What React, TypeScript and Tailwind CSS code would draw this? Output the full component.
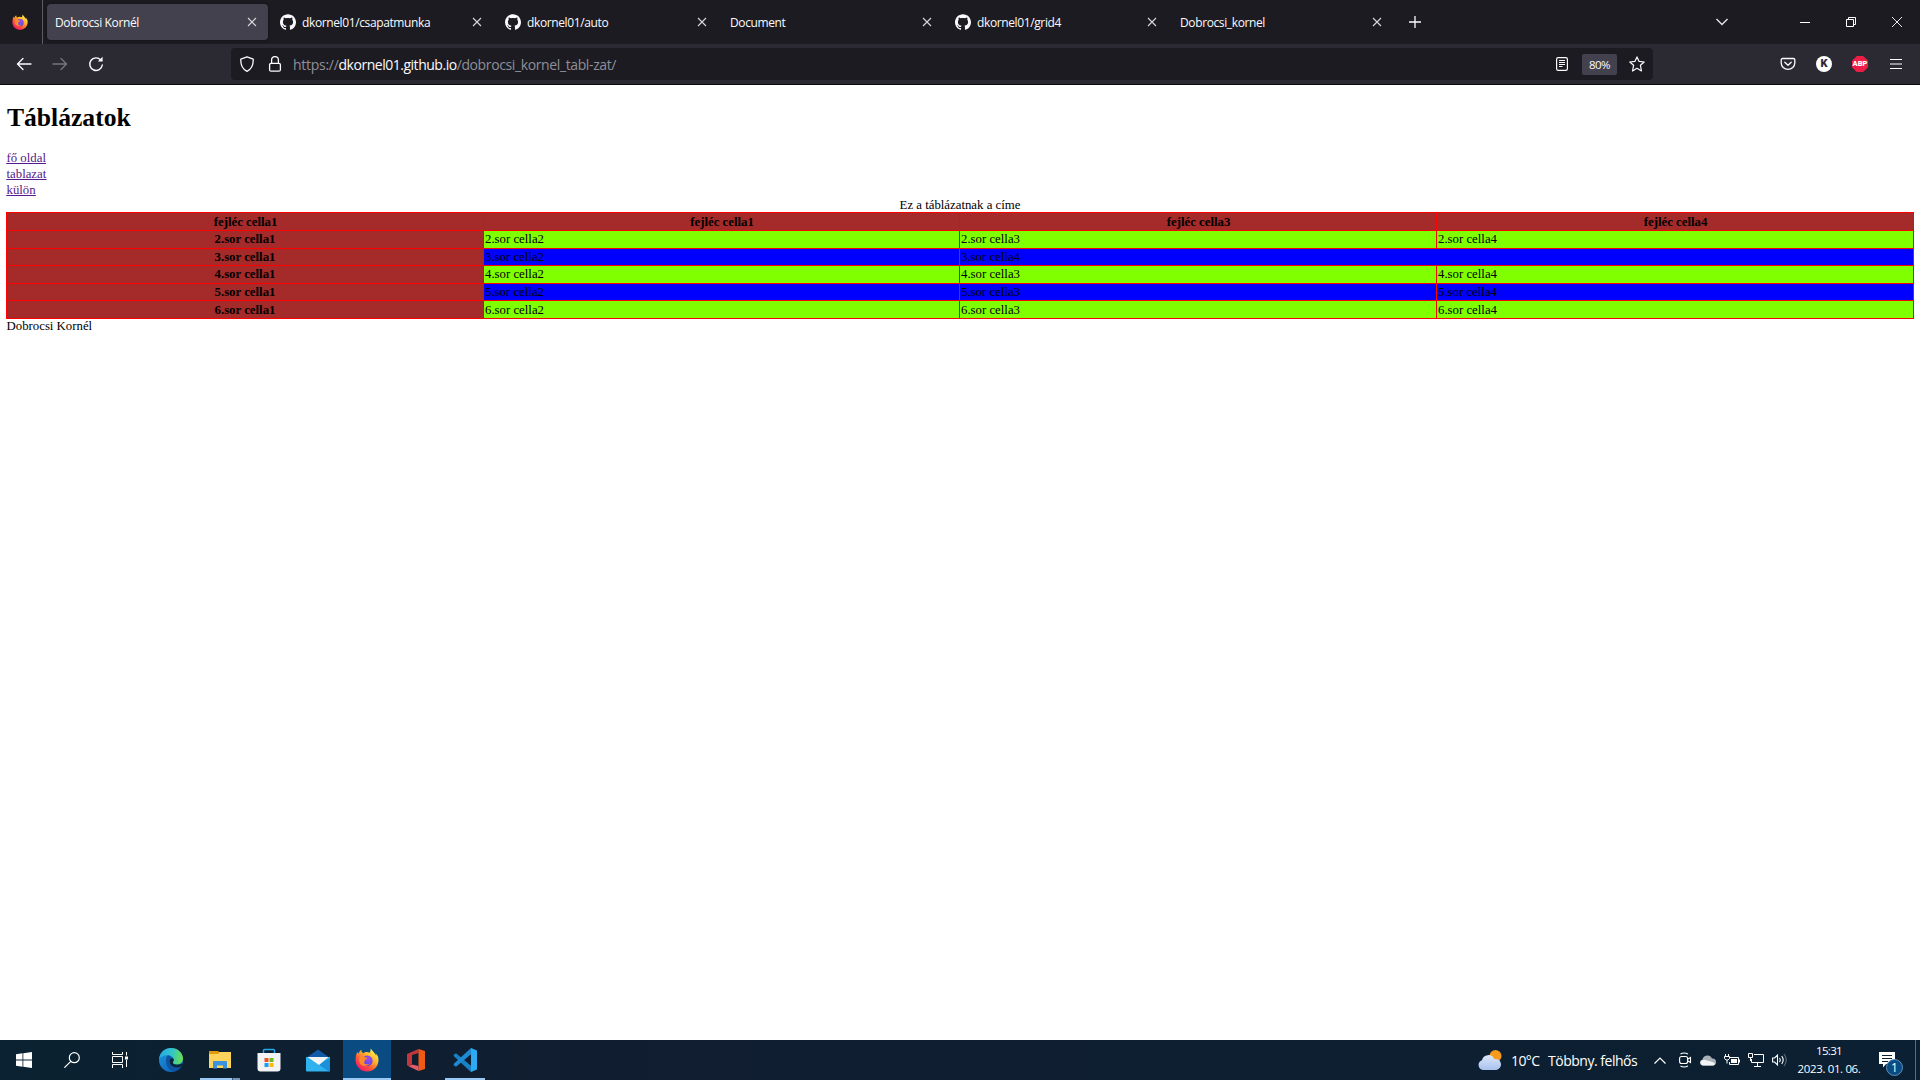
import React from "react";
import { SiGithub } from "react-icons/si";

const UI = "font-['Open_Sans','Noto_Sans',sans-serif]";

function FirefoxLogo({ size, id }: { size: number; id: string }) {
  return (
    <svg width={size} height={size} viewBox="0 0 24 24" className="shrink-0">
      <defs>
        <linearGradient id={id + "a"} x1="0.85" y1="0.1" x2="0.2" y2="0.95">
          <stop offset="0" stopColor="#fff44f" />
          <stop offset="0.35" stopColor="#ffb02a" />
          <stop offset="0.65" stopColor="#ff5a36" />
          <stop offset="1" stopColor="#f0176b" />
        </linearGradient>
        <radialGradient id={id + "b"} cx="0.6" cy="0.3" r="0.8">
          <stop offset="0" stopColor="#a04be8" />
          <stop offset="0.6" stopColor="#6a4be8" />
          <stop offset="1" stopColor="#5b2fb5" />
        </radialGradient>
      </defs>
      <path d="M22.9 8.6c-.5-1.3-1.6-2.7-2.4-3.1.5 1 .8 1.900.9 2.700C20 5 17.700 3.700 15.700.6c-.2 1.500.1 3-1.200 4.200C13 4 11 3.800 9.500 4.400L8 5.200C6.500 4.200 6.300 2.800 6.300 1.800 4.500 3 4 4.500 3.900 5.200L3 5.300 2.200 3.700C1 6.500.5 9.500.6 12.600.8 18.800 5.700 23.600 12 23.600c6.200 0 11.400-4.800 11.500-11.300 0-1.300-.1-2.500-.6-3.700z" fill={`url(#${id}a)`} />
      <circle cx="12.200" cy="12.800" r="5.400" fill={`url(#${id}b)`} />
      <path d="M4.500 9.500C6 8 8.500 8 9.800 9.200c1 .3 2.300.2 2.600.6 0 1-1.800 1.400-2.400 2.200-.3 1.600-1 2-.8 3.200 1.200 1.400 4 1.500 6 .2-2.600 3.300-8.300 3.100-10 .3C4.300 14.600 3.800 12 4.500 9.500z" fill="#ff8a2a" />
    </svg>
  );
}

function TabClose() {
  return (
    <svg width="10" height="10" viewBox="0 0 10 10" className="shrink-0" stroke="#d8d8dc" strokeWidth="1.100" fill="none">
      <path d="M1 1l8 8M9 1L1 9" />
    </svg>
  );
}

type Tab = { title: string; github?: boolean; active?: boolean };
const tabs: Tab[] = [
  { title: "Dobrocsi Kornél", active: true },
  { title: "dkornel01/csapatmunka", github: true },
  { title: "dkornel01/auto", github: true },
  { title: "Document" },
  { title: "dkornel01/grid4", github: true },
  { title: "Dobrocsi_kornel" },
];

function TabStrip() {
  return (
    <div className="flex h-[44px] items-center bg-[#1c1b22]">
      <div className="flex h-full w-[43px] shrink-0 items-center border-r border-[#5b5b66] pl-3">
        <FirefoxLogo size={16} id="fs" />
      </div>
      <div className="ml-1 flex gap-1">
        {tabs.map((t) => (
          <div
            key={t.title}
            className={
              "flex h-9 w-[221px] items-center rounded pr-[11px] pl-2 " +
              (t.active ? "bg-[#42414d] shadow-[0_0_3px_rgba(0,0,0,0.500)]" : "")
            }
          >
            {t.github && <SiGithub size={16} color="#fbfbfe" className="mr-1.5 shrink-0" />}
            <span className="flex-1 pt-px text-[12px] leading-4 tracking-[-0.380px] whitespace-nowrap text-[#fbfbfe]">{t.title}</span>
            <TabClose />
          </div>
        ))}
      </div>
      <svg width="12" height="12" viewBox="0 0 12 12" className="ml-4" stroke="#fbfbfe" strokeWidth="1.300">
        <path d="M6 0v12M0 6h12" />
      </svg>
      <div className="flex-1" />
      <svg width="12" height="8" viewBox="0 0 12 8" className="mr-[72px]" stroke="#e4e4e8" strokeWidth="1.400" fill="none">
        <path d="M.5 1L6 6.500 11.500 1" />
      </svg>
      <div className="mr-[36px] h-px w-[10px] bg-white" />
      <svg width="10" height="10" viewBox="0 0 10 10" className="mr-[36px]" stroke="#fff" fill="none">
        <path d="M.5 2.500h7v7h-7zM2.500 2.500v-2h7v7h-2" />
      </svg>
      <svg width="10" height="10" viewBox="0 0 10 10" className="mr-[18px]" stroke="#fff" strokeWidth="0.900">
        <path d="M0 0l10 10M10 0L0 10" />
      </svg>
    </div>
  );
}

function Toolbar() {
  return (
    <div className="flex h-[41px] items-start border-b border-[#0c0c0d] bg-[#2b2a33]">
      <div className="flex h-10 w-[231px] items-center pl-4">
        <svg width="16" height="16" viewBox="0 0 16 16" stroke="#fbfbfe" strokeWidth="1.300" fill="none" strokeLinecap="round">
          <path d="M15 8H1.500M7 2.500L1.500 8 7 13.500" />
        </svg>
        <svg width="16" height="16" viewBox="0 0 16 16" className="ml-5" stroke="#77767e" strokeWidth="1.300" fill="none" strokeLinecap="round">
          <path d="M1 8h13.500M9 2.500L14.500 8 9 13.500" />
        </svg>
        <svg width="16" height="16" viewBox="0 0 16 16" className="ml-5" stroke="#fbfbfe" strokeWidth="1.400" fill="none" strokeLinecap="round">
          <path d="M12.800 4A6.300 6.300 0 1 0 14.300 9" />
          <path d="M14.600.8v4.800H9.800z" fill="#fbfbfe" stroke="none" />
        </svg>
      </div>
      <div className="mt-1 flex h-8 w-[1422px] items-center rounded bg-[#1c1b22] pl-2">
        <svg width="16" height="16" viewBox="0 0 16 16" stroke="#fbfbfe" strokeWidth="1.300" fill="none" strokeLinejoin="round">
          <path d="M8 .8L14.200 3.200C14.400 7.500 13.500 12.500 8 15.300 2.500 12.500 1.600 7.500 1.800 3.200z" />
        </svg>
        <svg width="16" height="16" viewBox="0 0 16 16" className="ml-3" stroke="#fbfbfe" strokeWidth="1.300" fill="none">
          <rect x="2.600" y="7.300" width="10.800" height="7.900" rx="1.500" />
          <path d="M4.600 7V4a3.400 3.400 0 0 1 6.800 0v3" />
        </svg>
        <div className="ml-[10px] flex-1 pt-0.5 text-[14px] leading-5 whitespace-nowrap text-[#8f8f98]">
          <span className="tracking-[-0.280px]">https://</span>
          <span className="tracking-[-0.480px] text-[#fbfbfe]">dkornel01.github.io</span>
          <span className="tracking-[-0.380px]">/dobrocsi_kornel_tabl-zat/</span>
        </div>
        <svg width="12" height="14" viewBox="0 0 12 14" className="mr-[14px]" stroke="#fbfbfe" strokeWidth="1.200" fill="none">
          <rect x=".6" y=".6" width="10.800" height="12.800" rx="1.600" />
          <path d="M3 3.500h6M3 5.500h6M3 7.500h6M3 9.500h3.500" />
        </svg>
        <div className="mr-3 flex h-[21px] w-[35px] items-center justify-center rounded-xs bg-[#42414d] pt-px text-[11.500px] leading-5 tracking-[-0.600px] text-[#fbfbfe]">
          80%
        </div>
        <svg width="16" height="16" viewBox="0 0 16 16" className="mr-2" stroke="#fbfbfe" strokeWidth="1.200" fill="none" strokeLinejoin="round">
          <path d="M8 .9l2.100 4.500 5.100.6-3.800 3.300 1.100 5.700L8 12.300 3.500 15l1.100-5.700L.8 6l5.100-.6z" />
        </svg>
      </div>
      <div className="flex h-10 flex-1 items-center justify-end gap-5 pr-4">
        <svg width="16" height="16" viewBox="0 0 16 16" stroke="#fbfbfe" strokeWidth="1.300" fill="none" strokeLinecap="round" strokeLinejoin="round">
          <path d="M2.500 2.500h11c.7 0 1.300.5 1.300 1.300V7a6.800 6.300 0 0 1-13.600 0V3.800c0-.8.600-1.300 1.300-1.300z" />
          <path d="M4.800 6.300L8 9.300l3.200-3" />
        </svg>
        <div className="flex size-4 items-center justify-center rounded-full bg-white font-['Roboto',sans-serif] text-[11px] font-black leading-4 text-[#2b2a33]">K</div>
        <div className="flex size-4 items-center justify-center bg-[#ed1e45] font-['Roboto',sans-serif] text-[7.500px] font-black leading-4 text-white [clip-path:polygon(30%_0,70%_0,100%_30%,100%_70%,70%_100%,30%_100%,0_70%,0_30%)]">ABP</div>
        <svg width="16" height="16" viewBox="0 0 16 16" stroke="#fbfbfe" strokeWidth="1.200">
          <path d="M2 3.500h12M2 8h12M2 12.500h12" />
        </svg>
      </div>
    </div>
  );
}

const rows = [
  { h: "h-[18px]", pad: "", bg: "bg-[#80ff00]", cells: ["2.sor cella1", "2.sor cella2", "2.sor cella3", "2.sor cella4"] },
  { h: "h-[17px]", pad: "", bg: "bg-[#0000ff]", cells: ["3.sor cella1", "3.sor cella2", "3.sor cella4"] },
  { h: "h-[18px]", pad: "", bg: "bg-[#80ff00]", cells: ["4.sor cella1", "4.sor cella2", "4.sor cella3", "4.sor cella4"] },
  { h: "h-[17px]", pad: "", bg: "bg-[#0000ff]", cells: ["5.sor cella1", "5.sor cella2", "5.sor cella3", "5.sor cella4"] },
  { h: "h-[18px]", pad: "pt-px ", bg: "bg-[#80ff00]", cells: ["6.sor cella1", "6.sor cella2", "6.sor cella3", "6.sor cella4"] },
];

function Page() {
  return (
    <div className="h-[955px] bg-white px-[6px] font-['Liberation_Serif',serif] text-[12.800px] leading-4 text-black">
      <h1 className="pt-[17px] pl-px text-[25.600px] leading-[32px] font-bold">Táblázatok</h1>
      <div className="mt-[16px] flex flex-col items-start pl-[0.500px] text-[#551a8b] underline">
        <a>fő oldal</a>
        <a>tablazat</a>
        <a>külön</a>
      </div>
      <div className="h-[14px] text-center leading-[14px]">Ez a táblázatnak a címe</div>
      <div className="w-[1908px] border-r border-b border-[#ff0000]">
        <div className="grid h-[18px] grid-cols-[477px_476px_477px_477px] bg-[#a52a2a]">
          {["fejléc cella1", "fejléc cella1", "fejléc cella3", "fejléc cella4"].map((c, i) => (
            <div key={i} className="border-t border-l border-[#ff0000] pt-px pl-px text-center font-bold">{c}</div>
          ))}
        </div>
        {rows.map((r) => (
          <div key={r.cells[0]} className={"grid grid-cols-[477px_476px_477px_477px] " + r.h}>
            {r.cells.map((c, i) => (
              <div
                key={c}
                className={
                  "border-t border-l border-[#ff0000] " +
                  r.pad +
                  (i === 0 ? "bg-[#a52a2a] text-center font-bold " : "pl-px " + r.bg) +
                  (i === 2 && r.cells.length === 3 ? " col-span-2" : "")
                }
              >
                {c}
              </div>
            ))}
          </div>
        ))}
      </div>
      <div className="-mt-px pl-[0.500px]">Dobrocsi Kornél</div>
    </div>
  );
}

function AppButton({ children, bar, active }: { children: React.ReactNode; bar?: "full" | "split"; active?: boolean }) {
  return (
    <div className={"relative flex h-10 w-12 items-center justify-center " + (active ? "bg-[#0a4c82]" : "")}>
      {children}
      {active && <div className="absolute inset-x-0 bottom-0 h-0.5 bg-[#99c8f5]" />}
      {bar && (
        <div className="absolute inset-x-1 bottom-0 flex h-0.5 bg-[#99c8f5]">
          {bar === "split" && <div className="ml-auto w-2 border-l border-[#3f5a70] bg-[#7496b5]" />}
        </div>
      )}
    </div>
  );
}

function Taskbar() {
  return (
    <div className="flex h-10 items-center bg-linear-to-r from-[#0a2231] via-[#101d30] via-30% to-[#0b2032] text-white">
      <div className="flex h-10 w-12 items-center justify-center">
        <svg width="16" height="16" viewBox="0 0 16 16" fill="#fff"><path d="M0 2.300L6.500 1.300V7.500H0zM7.300 1.200L16 0V7.500H7.300zM0 8.400H6.500V14.700L0 13.700zM7.300 8.400H16V16L7.300 14.800z" /></svg>
      </div>
      <div className="flex h-10 w-12 items-center justify-center">
        <svg width="16" height="16" viewBox="0 0 16 16" fill="none" stroke="#fff" strokeWidth="1.200"><circle cx="10.300" cy="5.700" r="5" /><path d="M6.800 9.300L.4 15.700" /></svg>
      </div>
      <div className="mr-[3px] flex h-10 w-12 items-center justify-center">
        <svg width="16" height="16" viewBox="0 0 16 16" fill="none" stroke="#fff" strokeWidth="1">
          <path d="M.5 0v2.500h10V0M.5 4.500h10v6H.5zM.5 16v-3.500h10V16M14.500 0v3.500M14.500 8v7" /><path d="M13 4.500h3v3h-3z" fill="#fff" stroke="none" />
        </svg>
      </div>
      <div className="flex gap-px">
        <AppButton>
          <svg width="24" height="24" viewBox="0 0 24 24">
            <defs>
              <linearGradient id="e1" x1="0" y1="0.300" x2="1" y2="0.400"><stop offset="0" stopColor="#2aa7e0" /><stop offset="0.500" stopColor="#2fc3cf" /><stop offset="1" stopColor="#6be04c" /></linearGradient>
              <linearGradient id="e2" x1="0" y1="0" x2="0.600" y2="1"><stop offset="0" stopColor="#1b9de2" /><stop offset="1" stopColor="#1263b8" /></linearGradient>
            </defs>
            <circle cx="12" cy="12" r="12" fill="url(#e2)" />
            <path d="M.1 11C.8 4.500 5.800 0 12 0c6.800 0 12 5 12 10.500 0 3.500-2.600 6-6 6-2.500 0-4.200-1-4.200-2 0-.7 1-1.100 1-2.800 0-2.200-2.200-4.500-6-4.500C4.500 7.200 1 9 .1 11z" fill="url(#e1)" />
            <path d="M9 7.300C5.500 10 6 21 14.500 23.700 18 23.300 21 21 22.600 18.300c-5 2.400-12 .9-12-4.700 0-1.700.8-3 1.900-3.700C11.500 8.200 10.200 7.500 9 7.300z" fill="#0f54a0" />
            <path d="M13.800 14.500c.3 2.800 6 2.900 9.700.800l-1 3c-4.800 2.600-11.900.800-11.900-4.700 0-1.500.7-2.800 1.900-3.700 1.500 0 2.500 1.400 2.300 2.400-.1 1-1 1.300-1 2.200z" fill="#0a2638" />
          </svg>
        </AppButton>
        <AppButton bar="split">
          <svg width="22" height="18" viewBox="0 0 22 18">
            <path d="M0 1h22v16H0z" fill="#ffd35c" /><path d="M0 0h9l1.500 1.500L9 3H0z" fill="#e09a0b" /><path d="M4 17.500v-6.500a1 1 0 0 1 1-1h12a1 1 0 0 1 1 1v6.500h-4v-3H8v3z" fill="#3b93dd" />
          </svg>
        </AppButton>
        <AppButton>
          <svg width="24" height="24" viewBox="0 0 24 24">
            <path d="M6.500 6V2.500A1 1 0 0 1 7.500 1.500h9a1 1 0 0 1 1 1V6" fill="none" stroke="#27a5ea" strokeWidth="1.500" />
            <path d="M.5 5h23v15.500a3 3 0 0 1-3 3h-17a3 3 0 0 1-3-3z" fill="#f3f3f5" />
            <path d="M7.500 10h4v4h-4z" fill="#f25022" /><path d="M12.500 10h4v4h-4z" fill="#6fba1c" /><path d="M7.500 15h4v4h-4z" fill="#18a0e8" /><path d="M12.500 15h4v4h-4z" fill="#ffb900" />
          </svg>
        </AppButton>
        <AppButton>
          <svg width="24" height="23" viewBox="0 0 24 23">
            <path d="M0 9L12 .5 24 9z" fill="#0f5ba8" />
            <path d="M0 8h24v13.500a1 1 0 0 1-1 1H1a1 1 0 0 1-1-1z" fill="#2fb2ee" />
            <path d="M24 9V21.500a1 1 0 0 1-1 1L12.500 15.500z" fill="#1b90da" />
            <path d="M1.500 8h21L13 16z" fill="#f4f4f4" />
          </svg>
        </AppButton>
        <AppButton active><FirefoxLogo size={24} id="fl" /></AppButton>
        <AppButton>
          <svg width="18" height="22" viewBox="0 0 18 22">
            <path d="M0 5L11.500 0v4L5 6v9l-3.500 2.200L0 16z" fill="#c3363c" /><path d="M11.500 0L18 2v18l-6.500 2z" fill="#ef5a17" /><path d="M1.500 17.200L5 15.500l6.500 1.500v5z" fill="#e25b6c" />
          </svg>
        </AppButton>
        <AppButton bar="full">
          <svg width="24" height="24" viewBox="0 0 24 24">
            <path d="M1 6.500l2-1.200 15 12.500V24L.6 8z" fill="#1a80c4" /><path d="M1 17.500l2 1.300L18 6.200V0L.6 16z" fill="#1d8bd3" /><path d="M18 0l6 2.500v19L18 24z" fill="#2eaaf2" />
          </svg>
        </AppButton>
      </div>
      <div className="flex-1" />
      <svg width="24" height="20" viewBox="0 0 24 20" className="mr-[9px]">
        <defs><linearGradient id="cl" x1="0" y1="0" x2="0" y2="1"><stop offset="0" stopColor="#dce6fa" /><stop offset="1" stopColor="#a9c2ef" /></linearGradient></defs>
        <circle cx="17.500" cy="6" r="6" fill="#f79a1c" />
        <path d="M5 20a5 5 0 0 1-1-9.700A6.500 6.500 0 0 1 16.300 9 5.600 5.600 0 1 1 18.500 20z" fill="url(#cl)" />
      </svg>
      <div className="w-[37px] pt-0.5 text-[14px] leading-5 tracking-[-0.600px] whitespace-nowrap">10°C</div>
      <div className="w-[106px] pt-0.5 text-[14px] leading-5 tracking-[-0.480px] whitespace-nowrap">Többny. felhős</div>
      <svg width="12" height="7" viewBox="0 0 12 7" className="mr-[13px]" fill="none" stroke="#fff" strokeWidth="1.200"><path d="M.5 6.500L6 1l5.500 5.500" /></svg>
      <svg width="13" height="16" viewBox="0 0 13 16" className="mr-2" fill="none" stroke="#fff" strokeWidth="1.100">
        <rect x=".6" y="4.500" width="8" height="7" rx="2" /><path d="M9 7l2.500-1.500v5L9 9M1.500 2Q5 0 9 2M1.500 14q3.500 2 7.500 0" />
      </svg>
      <svg width="16" height="11" viewBox="0 0 16 11" className="mr-2"><path d="M3 10.500A3 3 0 0 1 2.500 4.600 5 5 0 0 1 12 3.500a3.500 3.500 0 0 1 1 7z" fill="#a9b0b6" /><path d="M2.500 10.500a2.800 2.800 0 0 1 0-5.500l2-.3 8 2.300 2.500 1.500a2 2 0 0 1-1.500 2z" fill="#f2f3f4" /></svg>
      <svg width="16" height="12" viewBox="0 0 16 12" className="mr-2" fill="none" stroke="#fff"><path d="M6 3.500h8.500v7h-9V8M15.500 5.500v3M1.500 0v2.500M4.500 0v2.500M.5 2.500h5v2L4 6H2L.5 4.500zM3 6v3.500" /><path d="M7 5h6v4H7z" fill="#fff" stroke="none" /></svg>
      <svg width="16" height="14" viewBox="0 0 16 14" className="mr-2" fill="none" stroke="#fff"><path d="M6 1.500h9.500v8h-12V6M9.500 9.500v3.500M6 13.500h7M.5.500h4v4h-4zM2.500 5v3" /></svg>
      <svg width="16" height="14" viewBox="0 0 16 14" className="mr-[6px]" fill="none" stroke="#fff" strokeWidth="1.100"><path d="M.6 5h2L5.500 2v10L2.600 9h-2zM7.500 5q1.500 2 0 4" /><path d="M9.700 3.200q3 3.800 0 7.600" /><path d="M12 1q4.500 6 0 12" stroke="#5d6c78" /></svg>
      <div className="flex w-[70px] flex-col items-center text-[11.500px] leading-[18px] whitespace-nowrap">
        <span className="tracking-[-0.700px]">15:31</span>
        <span className="tracking-[-0.360px]">2023. 01. 06.</span>
      </div>
      <div className="relative ml-[15px] h-4 w-9">
        <svg width="16" height="16" viewBox="0 0 16 16"><path d="M0 0h16v12H7l-3 3.500V12H0z" fill="#fff" /><path d="M3 3.500h10M3 6.500h10M3 9.500h6" stroke="#0b2033" /></svg>
        <div className="absolute top-[7px] left-[7px] flex size-[17px] items-center justify-center rounded-full border border-[#5d8fbd] bg-[#0a4c82] text-[12px] leading-4">1</div>
      </div>
      <div className="mr-1 h-10 w-px bg-[#5d6c78]" />
    </div>
  );
}

export default function App() {
  return (
    <div className={"flex h-[1080px] w-[1920px] flex-col overflow-hidden " + UI}>
      <TabStrip />
      <Toolbar />
      <Page />
      <Taskbar />
    </div>
  );
}
